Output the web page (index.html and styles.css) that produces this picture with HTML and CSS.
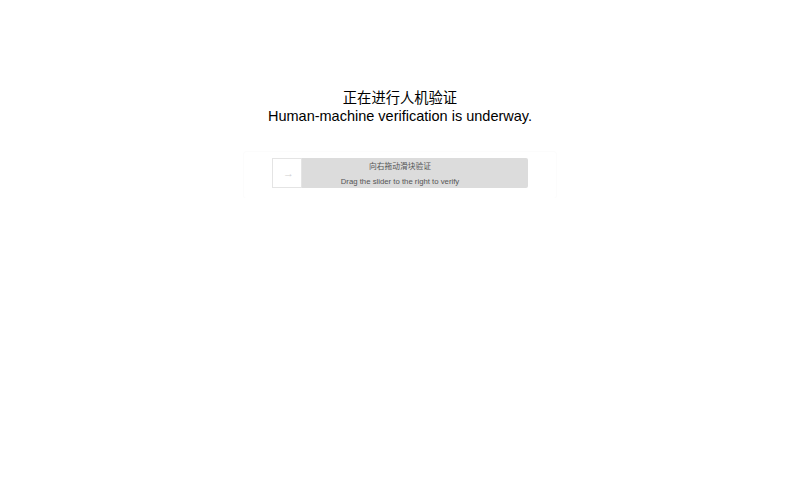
FILE: index.html
```html
<!DOCTYPE html>
<html>
<head>
<meta charset="utf-8">
<link rel="stylesheet" href="styles.css">
</head>
<body>
<div class="page">
  <div class="title">
    <div class="title-zh">正在进行人机验证</div>
    <div class="title-en">Human-machine verification is underway.</div>
  </div>
  <div class="card">
    <div class="slider">
      <div class="track">
        <div class="track-zh">向右拖动滑块验证</div>
        <div class="track-en">Drag the slider to the right to verify</div>
      </div>
      <div class="handle">→</div>
    </div>
  </div>
</div>
</body>
</html>
```

FILE: styles.css
```css
html, body {
  margin: 0;
  padding: 0;
  background: #fff;
}
body {
  font-family: "Liberation Sans", Arial, "Noto Sans CJK SC", sans-serif;
  color: #000;
}
.page {
  display: flex;
  flex-direction: column;
  align-items: center;
  padding-top: 89px;
}
.title {
  text-align: center;
  font-size: 14.5px;
  line-height: 17px;
}
.title-zh {
  font-size: 14.3px;
  line-height: 19px;
}
.card {
  margin-top: 27px;
  width: 312px;
  padding: 6px 0 10px;
  display: flex;
  justify-content: center;
  box-shadow: 0 0 2px rgba(0,0,0,0.06);
  border-radius: 2px;
}
.slider {
  position: relative;
  width: 256px;
  height: 30px;
  background: #dcdcdc;
  border-radius: 2px;
}
.handle {
  position: absolute;
  left: 0;
  top: 0;
  width: 25px;
  height: 28px;
  padding-left: 3px;
  border: 1px solid #e4e4e4;
  background: #fff;
  color: #cfcfcf;
  font-size: 11px;
  display: flex;
  align-items: center;
  justify-content: center;
}
.track {
  height: 100%;
  display: flex;
  flex-direction: column;
  align-items: center;
  color: #555;
  font-size: 7.75px;
}
.track-zh {
  margin-top: 3px;
  line-height: 11px;
}
.track-en {
  margin-top: 4px;
  line-height: 11px;
}
```
